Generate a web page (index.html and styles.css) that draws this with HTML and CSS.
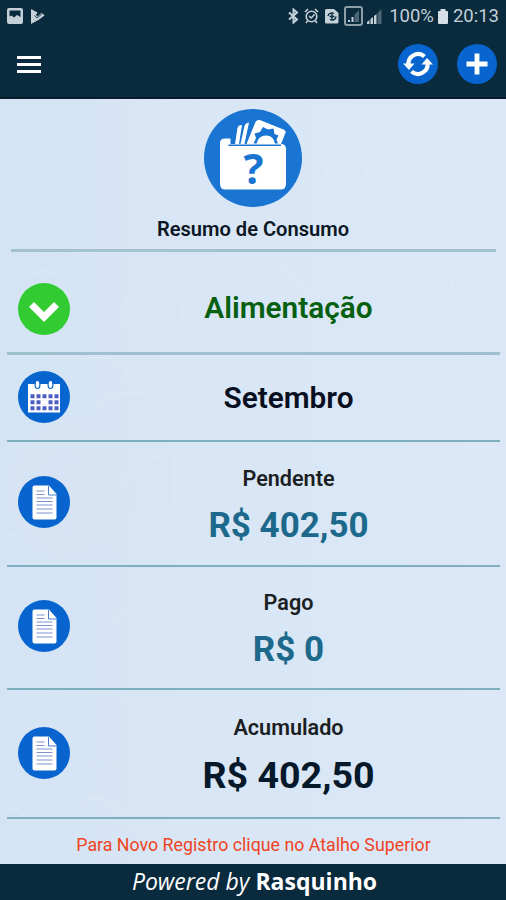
FILE: index.html
```html
<!DOCTYPE html>
<html lang="pt-BR">
<head>
    <meta charset="UTF-8">
    <meta name="viewport" content="width=device-width, initial-scale=1.0">
    <title>Resumo de Consumo</title>
    <link rel="stylesheet" href="styles.css">
</head>
<body>
    <!-- shared icons -->
    <svg class="sprite" width="0" height="0">
        <symbol id="doc" viewBox="0 0 52 52">
            <path d="M16.500 9.500h14.500l7.500 8.500v23.500a2 2 0 0 1-2 2h-20a2 2 0 0 1-2-2v-30a2 2 0 0 1 2-2z" fill="#fff"/>
            <path d="M30.500 10v9h8" fill="none" stroke="#4a7fd0"/>
            <path d="M18.500 15h8M18.500 18.500h8M18.500 22h16M18.500 25.500h16M18.500 29h16M18.500 33h16M18.500 37h16" stroke="#7f92cf" stroke-width="1.200"/>
        </symbol>
    </svg>

    <div class="app">
        <header class="header">
            <div class="status-bar">
                <div class="status-left">
                    <svg width="16" height="16" viewBox="0 0 16 16">
                        <path fill-rule="evenodd" d="M2 0h12a2 2 0 0 1 2 2v12a2 2 0 0 1-2 2H2a2 2 0 0 1-2-2V2a2 2 0 0 1 2-2zM2.500 2.500v6l2-1 2.500 2 3-2.500 3.500 2v-6.500z" fill="#c3d0d8"/>
                    </svg>
                    <svg width="14" height="15" viewBox="0 0 14 15">
                        <path d="M0 0l6.500 3.500-1.500 2.500 1.500 1.500 4.500-4 2.500 3L7.500 11 0 15z" fill="#c3d0d8"/>
                        <path d="M3.500 6.500L6 9 12 4" fill="none" stroke="#0a2a3d" stroke-width=".8"/>
                    </svg>
                </div>
                <div class="status-right">
                    <svg width="11" height="16" viewBox="0 0 11 16">
                        <path d="M1 4.500l8 7-3.500 3V1.500L9 4.500l-8 7" fill="none" stroke="#c3d0d8" stroke-width="2"/>
                    </svg>
                    <svg class="alarm" width="15" height="16" viewBox="0 0 15 16" fill="none" stroke="#c3d0d8" stroke-width="1.600">
                        <circle cx="7.500" cy="8.500" r="5.300"/>
                        <path d="M1 4l3-3M14 4l-3-3M5 8l2.200 2L10.500 6.500M3.500 13L2 15M11.500 13l1.500 2"/>
                    </svg>
                    <svg class="sim" width="14" height="16" viewBox="0 0 14 16">
                        <path d="M1.500 1H9l4.500 4v9a1.500 1.500 0 0 1-1.500 1.500H1.500A1.500 1.500 0 0 1 0 14V2.500A1.500 1.500 0 0 1 1.500 1z" fill="#c3d0d8"/>
                        <path d="M3 8a4 3.500 0 0 1 6-2.500M11 8.500a4 3.500 0 0 1-6 3M7 6v5M4.500 8.500h5" fill="none" stroke="#0a2a3d" stroke-width="1.400"/>
                    </svg>
                    <svg class="signal-box" width="19" height="20" viewBox="0 0 19 20">
                        <rect x="1" y="1" width="17" height="18" rx="2" fill="none" stroke="#8e9fa9" stroke-width="2"/>
                        <path d="M4 16h2v-2H4zM7.500 16h2v-5h-2z" fill="#c3d0d8"/>
                        <path d="M10.500 16V8.500L15 4v12z" fill="#4c6573"/>
                    </svg>
                    <svg class="signal" width="15" height="15" viewBox="0 0 15 15">
                        <path d="M0 15v-2l2.500-2v4zM3.500 15v-5L6 8v7zM7 15V7l2.500-2v10z" fill="#c3d0d8"/>
                        <path d="M10.500 15V4L14.500 0v15z" fill="#4c6573"/>
                    </svg>
                    <span class="percent">100%</span>
                    <svg class="battery" width="10" height="15" viewBox="0 0 10 15">
                        <path d="M2.500 0h5v2H9a1 1 0 0 1 1 1v11a1 1 0 0 1-1 1H1a1 1 0 0 1-1-1V3a1 1 0 0 1 1-1h1.500z" fill="#d5dfe5"/>
                    </svg>
                    <span class="clock">20:13</span>
                </div>
            </div>
            <div class="toolbar">
                <button class="menu-btn" aria-label="Menu"><span></span><span></span><span></span></button>
                <div class="actions">
                    <button class="round-btn" aria-label="Atualizar">
                        <svg width="40" height="40" viewBox="0 0 40 40">
                            <path d="M10.500 21A9.700 9.700 0 0 1 26.500 12.500" fill="none" stroke="#fff" stroke-width="4.200"/>
                            <path d="M29.500 19A9.700 9.700 0 0 1 13.500 27.500" fill="none" stroke="#fff" stroke-width="4.200"/>
                            <path d="M5 19.500h11.500l-5.500 6.500zM35 20.500H23.500l5.500-6.500z" fill="#fff"/>
                        </svg>
                    </button>
                    <button class="round-btn" aria-label="Adicionar">
                        <svg width="40" height="40" viewBox="0 0 40 40">
                            <path d="M20 9.500v21M9.500 20h21" stroke="#fff" stroke-width="4.800"/>
                        </svg>
                    </button>
                </div>
            </div>
        </header>

        <main class="content">
            <section class="summary">
                <svg class="wallet" width="98" height="98" viewBox="0 0 98 98">
                    <circle cx="49" cy="49" r="49" fill="#1975d1"/>
                    <g fill="#fff">
                        <path d="M31 35l2.500-16q.5-3 4.500-3L35 35zM36.500 35l4-18q.7-3 4.500-3.500L40.500 35zM42.500 35l9-22q1.500-3 5-1.700l23 9.200q3 1 1.800 3.700L77 35z"/>
                        <path d="M16 36v-2q0-4.500 5-4.500h5.500V35H77q5 0 5 5v35q0 5.500-5.500 5.500h-55Q16 80.500 16 75z"/>
                    </g>
                    <path d="M24.500 36.200H77" stroke="#1975d1" stroke-width="1.600"/>
                    <path d="M49.500 34.500l2.500-5.500-1.500-4.500 5.500-1.500 3-5 5 2.500 5.500-1 1 5.500 4 1.500-2 4 1.500 4z" fill="#1975d1"/>
                    <path d="M52.500 35q1.500-8.500 9.500-8.500t9 8.500z" fill="#fff"/>
                    <text class="question" x="49.500" y="75" text-anchor="middle">?</text>
                </svg>
                <h1>Resumo de Consumo</h1>
            </section>

            <section class="row row-category">
                <div class="icon green">
                    <svg width="52" height="52" viewBox="0 0 52 52">
                        <path d="M13.500 21.500L26 34l12.500-12.500" fill="none" stroke="#fff" stroke-width="7"/>
                    </svg>
                </div>
                <div class="info"><h2 class="category">Alimentação</h2></div>
            </section>

            <section class="row row-month">
                <div class="icon">
                    <svg width="52" height="52" viewBox="0 0 52 52">
                        <path d="M10 13h32v28.500H10z" fill="#fff"/>
                        <path d="M12.500 25.300h28M12.500 31.300h28M12.500 37.300h28" stroke="#4c5fc0" stroke-width="4" stroke-dasharray="4 2"/>
                        <path d="M24 29h5v4.500h-5z" fill="#fff"/>
                        <g fill="#fff" stroke="#0865cf" stroke-width="1.200">
                            <ellipse cx="19.500" cy="13.500" rx="2.400" ry="4"/>
                            <ellipse cx="32.500" cy="13.500" rx="2.400" ry="4"/>
                        </g>
                    </svg>
                </div>
                <div class="info"><h2 class="month">Setembro</h2></div>
            </section>

            <section class="row row-pending">
                <div class="icon"><svg width="52" height="52"><use href="#doc"/></svg></div>
                <div class="info">
                    <h3>Pendente</h3>
                    <p class="value">R$ 402,50</p>
                </div>
            </section>

            <section class="row row-paid">
                <div class="icon"><svg width="52" height="52"><use href="#doc"/></svg></div>
                <div class="info">
                    <h3>Pago</h3>
                    <p class="value">R$ 0</p>
                </div>
            </section>

            <section class="row row-total">
                <div class="icon"><svg width="52" height="52"><use href="#doc"/></svg></div>
                <div class="info">
                    <h3>Acumulado</h3>
                    <p class="value total">R$ 402,50</p>
                </div>
            </section>

            <p class="hint">Para Novo Registro clique no Atalho Superior</p>
        </main>

        <footer class="footer"><em>Powered by</em> <strong>Rasquinho</strong></footer>
    </div>
</body>
</html>
```
FILE: styles.css
```css
* { box-sizing: border-box; margin: 0; padding: 0; }
body { font-family: Roboto, sans-serif; background: #d9e6f5; }
svg { display: block; flex: none; }
button { border: none; background: none; cursor: pointer; }
.sprite { position: absolute; }
.app {
    width: 506px;
    height: 900px;
    display: flex;
    flex-direction: column;
    overflow: hidden;
}

/* header */
.header {
    height: 99px;
    background: #0a2a3d;
    border-bottom: 2px solid #071b2c;
}
.status-bar {
    height: 32px;
    padding: 0 7px;
    display: flex;
    justify-content: space-between;
    align-items: center;
    color: #c3d0d8;
}
.status-left, .status-right { display: flex; align-items: center; }
.status-left { gap: 8px; }
.alarm { margin-left: 5px; }
.sim { margin-left: 6px; }
.signal-box { margin-left: 5px; }
.signal { margin-left: 4px; }
.percent { margin-left: 7px; font-size: 18.500px; }
.battery { margin-left: 4px; }
.clock { margin-left: 5px; font-size: 18.500px; }
.toolbar {
    height: 64px;
    padding: 0 9px 0 17px;
    display: flex;
    justify-content: space-between;
    align-items: center;
}
.menu-btn {
    width: 24px;
    display: flex;
    flex-direction: column;
    gap: 4px;
}
.menu-btn span { height: 3px; background: #fff; }
.actions { display: flex; gap: 19px; }
.round-btn {
    width: 40px;
    height: 40px;
    border-radius: 50%;
    background: #0865cf;
}

/* content, with faint scratches over the light blue */
.content {
    flex: 1;
    padding: 0 6px 0 7px;
    background:
        url("data:image/svg+xml,%3Csvg xmlns='http://www.w3.org/2000/svg' width='506' height='765' fill='none' stroke='white' stroke-opacity='.18'%3E%3Cg%3E%3Ccircle cx='154' cy='212' r='29'/%3E%3Ccircle cx='154' cy='212' r='17'/%3E%3Ccircle cx='154' cy='212' r='6'/%3E%3Ccircle cx='347' cy='70' r='20'/%3E%3Cpath d='M8 200Q30 160 65 178M83 260q40-8 45 20M95 305q30-20 70-5M120 385q20-30 50-28M175 351v60M193 351v70M5 435q20 0 28 22M115 520l32-25M190 568l22 22M125 605q20-30 60-50M180 568l45 35M0 560l35 30M22 630q25-8 20 25M75 705q30-15 45 10M145 690l50-30M5 715q15-15 25 15M210 60q15-30 60-20M380 30q40 10 60 45M420 150q30 12 35 45M280 170q25 10 30 35'/%3E%3C/g%3E%3C/svg%3E"),
        radial-gradient(circle at 75px 390px, #dedff140, transparent 80px),
        linear-gradient(90deg, #d5e4f4, #dce8f8);
}
.summary {
    height: 153px;
    margin: 0 4px;
    padding: 10px 1px 0 0;
    display: flex;
    flex-direction: column;
    align-items: center;
    border-bottom: 3px solid #a3c2d0;
}
.summary h1 {
    margin-top: 10px;
    font-size: 20.100px;
    line-height: 24px;
    font-weight: 600;
    color: #0c1723;
}
.question { font: bold 42px "Open Sans", sans-serif; fill: #1975d1; }
.row {
    padding-left: 11px;
    display: flex;
    align-items: center;
    border-bottom: 2px solid #7dafbf;
}
.row-category { height: 103px; padding-top: 14px; border-bottom: 3px solid #9fc0ce; }
.row-month { height: 87px; }
.row-pending { height: 125px; }
.row-paid { height: 123px; }
.row-total { height: 129px; }
.row-month .icon, .row-total .icon { margin-bottom: 2px; }
.row-pending .icon, .row-paid .icon { margin-bottom: 3px; }
.icon {
    width: 52px;
    height: 52px;
    border-radius: 50%;
    background: #0865cf;
}
.green { background: #32cb32; }
.info { flex: 1; padding-left: 7px; text-align: center; }
.info h2 { font-size: 29.800px; line-height: 36px; font-weight: 600; color: #080f20; }
.info .category { margin-bottom: 3px; color: #075f10; }
.info h3 { padding-top: 6px; font-size: 21.600px; line-height: 26px; font-weight: 600; color: #1c1f22; }
.value {
    margin-top: 13px;
    font-size: 35px;
    line-height: 42px;
    font-weight: 700;
    color: #1d698b;
}
.row-total h3 { padding-top: 4px; }
.value.total { font-size: 37.600px; color: #06192a; }
.hint {
    padding-top: 14px;
    text-align: center;
    font-size: 17.800px;
    line-height: 24px;
    color: #f0431f;
}

.footer {
    height: 36px;
    padding-left: 3px;
    background: #0a2a3d;
    color: #fff;
    text-align: center;
    font: 23px/34px "Open Sans", sans-serif;
}
```
